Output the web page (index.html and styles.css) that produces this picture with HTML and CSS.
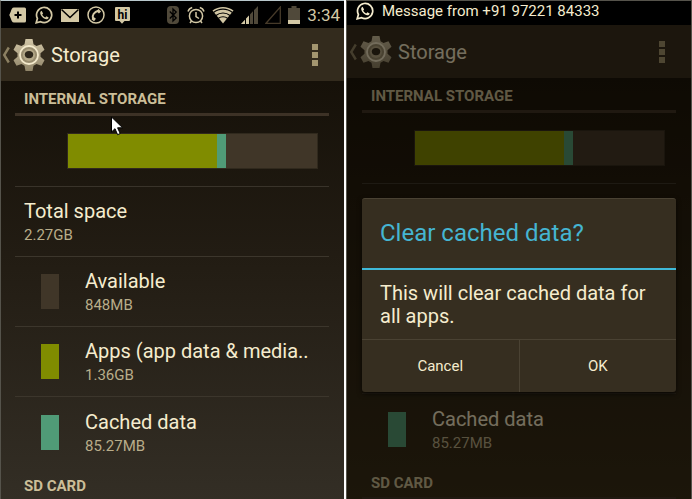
FILE: index.html
```html
<!DOCTYPE html>
<html lang="en">
<head>
  <meta charset="UTF-8">
  <title>Storage - clear cached data</title>
  <meta name="viewport" content="width=device-width, initial-scale=1.0">
  <link rel="stylesheet" href="styles.css">
</head>
<body>
  <!-- shared icons -->
  <svg class="defs" aria-hidden="true">
    <defs>
      <linearGradient id="metal" x1="0" y1="0" x2="0" y2="1">
        <stop offset="0" stop-color="#d2c6a6"/>
        <stop offset="1" stop-color="#8f8468"/>
      </linearGradient>
      <symbol id="gear" viewBox="0 0 32 34">
        <path fill="url(#metal)" d="M12.5 1h7l1 5.2 3 1.8 5-1.8 3 5.6-4 3.4v3.6l4 3.4-3 5.6-5-1.8-3 1.8-1 5.2h-7l-1-5.2-3-1.8-5 1.8-3-5.6 4-3.4v-3.6l-4-3.4 3-5.6 5 1.8 3-1.8z"/>
        <circle cx="16" cy="17" r="9" fill="#988c6e" stroke="#f3e9cb" stroke-width="1.8"/>
        <circle cx="16" cy="17" r="6" fill="#b5a988"/>
        <ellipse cx="16" cy="16.6" rx="4.2" ry="3.6" fill="#2f281b"/>
      </symbol>
      <symbol id="whatsapp" viewBox="0 0 18 18">
        <path fill="none" stroke="currentColor" stroke-width="1.7" d="M1.2 16.8l1.2-4.3A7.6 7.6 0 1 1 5.6 15.700z"/>
        <path fill="currentColor" d="M6.600 4.800c-1.700.8-1.800 2.600-.7 4.400 1.300 2.200 3.200 3.700 5.200 4.100 1.300.2 2.400-.6 2.600-1.800l-2.300-1.300-1.100 1.200c-1.400-.5-2.500-1.600-3.100-2.900l.9-1.100z"/>
      </symbol>
    </defs>
  </svg>

  <main class="screens">
    <section class="phone">
      <div class="status-bar">
        <div class="notifications">
          <svg width="18" height="18" viewBox="0 0 18 18"><path fill="currentColor" d="M5 1.500h10.500a1.500 1.500 0 0 1 1.500 1.500v12a1.500 1.500 0 0 1-1.500 1.500H5c-2 0-2.500-2-3.200-4L.3 9l1.500-3.500c.7-2 1.200-4 3.200-4z"/><path stroke="#000" stroke-width="2" d="M9 5.500v7M5.500 9h7"/></svg>
          <svg width="18" height="18"><use href="#whatsapp"/></svg>
          <svg width="18" height="18" viewBox="0 0 18 18"><path fill="currentColor" d="M0 3h18v13H0z"/><path fill="none" stroke="#000" stroke-width="1.500" d="M.5 3.500L9 11.500l8.500-8"/></svg>
          <svg width="18" height="18" viewBox="0 0 18 18"><circle cx="9" cy="9" r="8" fill="none" stroke="currentColor" stroke-width="1.500"/><path fill="none" stroke="currentColor" stroke-width="2" d="M6 13.200c-1.500-4 1.500-7.600 5.500-8.500"/><path stroke="currentColor" stroke-width="3" d="M5.500 12l2.500 2M10.500 4l2.500 2.500"/></svg>
          <svg width="18" height="18" viewBox="0 0 18 18"><path fill="currentColor" d="M3 1h13a1 1 0 0 1 1 1v12a1 1 0 0 1-1 1h-4.500L9 17.800 6.500 15H3a1 1 0 0 1-1-1V2a1 1 0 0 1 1-1z"/><text class="hi" x="9.500" y="12.500" text-anchor="middle">hi</text></svg>
        </div>
        <div class="system">
          <svg width="13" height="18" viewBox="0 0 13 18"><rect width="12" height="18" rx="4" fill="#50493a"/><path fill="none" stroke="#000" stroke-width="1.300" d="M2.800 5.500l6.400 6.500L6 15V3l3.200 3-6.400 6.500"/></svg>
          <svg width="18" height="18" viewBox="0 0 18 18"><g fill="none" stroke="currentColor" stroke-width="1.500"><circle cx="9" cy="10" r="6.600"/><path d="M9 6v4.500l3 2M1 5.500A6 6 0 0 1 5.200 1.500M17 5.500a6 6 0 0 0-4.200-4M4.500 15L3 17M13.500 15l1.500 2"/></g></svg>
          <svg width="22" height="18" viewBox="0 0 22 18"><path fill="currentColor" d="M.5 4.500C6.500-.2 15.500-.2 21.500 4.500L11 17.500z"/><g fill="none" stroke="#000" stroke-width="1.100"><path d="M1.500 6.500c5.500-4.500 13.500-4.500 19 0M4 9.500c4-3.300 10-3.300 14 0M6.500 12.300c2.500-2 6.500-2 9 0"/></g></svg>
          <svg width="17" height="18" viewBox="0 0 17 18"><path fill="#50493a" d="M0 18L17 0v18z"/><path fill="currentColor" d="M0 18l8-8.500V18z"/><path stroke="#000" d="M4.500 8v10M8.500 6v12M12.500 2v16"/></svg>
          <svg width="16" height="18" viewBox="0 0 16 18"><path fill="none" stroke="#463a29" stroke-width="1.300" d="M1 17.300L15.300 1v16.300z"/></svg>
          <svg width="12" height="18" viewBox="0 0 12 18"><path fill="#50493a" d="M3.500 0h5v2H12v16H0V2h3.500z"/><path fill="currentColor" d="M0 14h12v4H0z"/></svg>
          <time>3:34</time>
        </div>
      </div>

      <div class="screen">
        <header class="action-bar">
          <button class="up" aria-label="Navigate up">
            <svg width="9" height="18" viewBox="0 0 9 18"><path fill="none" stroke="#8c8062" stroke-width="2.400" d="M7.800 1.500L3.200 9l4.600 7.500"/></svg>
            <svg width="32" height="34"><use href="#gear"/></svg>
          </button>
          <h1>Storage</h1>
          <button class="more" aria-label="More options"><i></i><i></i><i></i></button>
        </header>

        <div class="content">
          <h2>Internal storage</h2>
          <div class="chart">
            <div class="usage">
              <span class="apps" style="width: 60%"></span>
              <span class="cached" style="width: 3.5%"></span>
            </div>
          </div>
          <ul class="list">
            <li><div><h3>Total space</h3><p>2.27GB</p></div></li>
            <li><span class="swatch free"></span><div><h3>Available</h3><p>848MB</p></div></li>
            <li><span class="swatch apps"></span><div><h3>Apps (app data &amp; media..</h3><p>1.36GB</p></div></li>
            <li><span class="swatch cached"></span><div><h3>Cached data</h3><p>85.27MB</p></div></li>
          </ul>
          <h2>SD card</h2>
        </div>
      </div>

      <svg class="pointer" width="13" height="20" viewBox="0 0 13 20"><path fill="#fff" stroke="#000" d="M.5 1v15l3.500-3.300 2.600 6 2.600-1.200-2.600-5.700h5z"/></svg>
    </section>

    <section class="phone with-dialog">
      <div class="status-bar ticker">
        <svg width="18" height="18"><use href="#whatsapp"/></svg>
        <span>Message from +91 97221 84333</span>
      </div>

      <div class="screen">
        <header class="action-bar">
          <button class="up" aria-label="Navigate up">
            <svg width="9" height="18" viewBox="0 0 9 18"><path fill="none" stroke="#8c8062" stroke-width="2.400" d="M7.800 1.500L3.200 9l4.600 7.500"/></svg>
            <svg width="32" height="34"><use href="#gear"/></svg>
          </button>
          <h1>Storage</h1>
          <button class="more" aria-label="More options"><i></i><i></i><i></i></button>
        </header>

        <div class="content">
          <h2>Internal storage</h2>
          <div class="chart">
            <div class="usage">
              <span class="apps" style="width: 60%"></span>
              <span class="cached" style="width: 3.5%"></span>
            </div>
          </div>
          <ul class="list">
            <li></li>
            <li></li>
            <li></li>
            <li><span class="swatch cached"></span><div><h3>Cached data</h3><p>85.27MB</p></div></li>
          </ul>
          <h2>SD card</h2>
        </div>

        <div class="overlay">
          <div class="dialog" role="dialog" aria-labelledby="dialogTitle">
            <h2 id="dialogTitle">Clear cached data?</h2>
            <p>This will clear cached data for all apps.</p>
            <div class="buttons">
              <button>Cancel</button>
              <button>OK</button>
            </div>
          </div>
        </div>
      </div>
    </section>
  </main>
</body>
</html>
```
FILE: styles.css
```css
* {
  box-sizing: border-box;
}
body {
  margin: 0;
  background: #fff;
  font-family: Roboto, "Liberation Sans", sans-serif;
  color: #f5ecce;
}
h1, h2, h3, p, ul {
  margin: 0;
  padding: 0;
  font-weight: normal;
}
button {
  border: 0;
  padding: 0;
  background: none;
  font: inherit;
  color: inherit;
  cursor: pointer;
}
svg {
  display: block;
  flex: none;
}
.defs {
  position: absolute;
  width: 0;
  height: 0;
}
.screens {
  display: grid;
  grid-template-columns: 344fr 346fr;
  gap: 2px;
  height: 100vh;
}
.phone {
  position: relative;
  display: flex;
  flex-direction: column;
  min-width: 0;
  overflow: hidden;
  border-top: 1px solid #b9c8cc;
  border-left: 1px solid #55534b;
}
.with-dialog {
  border-top-color: #55534b;
  border-right: 1px solid #55534b;
}

/* status bar */
.status-bar {
  flex: none;
  display: flex;
  align-items: center;
  justify-content: space-between;
  height: 27px;
  padding: 0 4px 0 8px;
  background: #000;
  color: #d3c8a5;
}
.notifications {
  display: flex;
  gap: 8px;
}
.system {
  display: flex;
  align-items: center;
  gap: 7px;
}
.system time {
  font-size: 17px;
}
.hi {
  font-size: 12px;
  font-weight: bold;
}
.ticker {
  justify-content: flex-start;
  gap: 8px;
  height: 24px;
  padding: 0 9px 4px;
  font-size: 15px;
  color: #f5ecce;
}

/* settings screen */
.screen {
  position: relative;
  flex: 1;
  min-height: 0;
  display: flex;
  flex-direction: column;
}
.action-bar {
  flex: none;
  display: flex;
  align-items: center;
  height: 53px;
  background: #332b1d;
}
.up {
  display: flex;
  align-items: center;
  gap: 3px;
}
.action-bar h1 {
  flex: 1;
  padding-left: 6px;
  font-size: 20px;
}
.more {
  display: grid;
  gap: 2px;
  margin-right: 26px;
}
.more i {
  width: 6px;
  height: 6px;
  background: #a3956f;
}
.content {
  flex: 1;
  min-height: 0;
  padding: 0 15px 0 14px;
  overflow: hidden;
  background: linear-gradient(#161109, #231d14 45%, #332e25);
}
.content h2 {
  height: 35px;
  padding: 0 9px;
  border-bottom: 3px solid #3d3226;
  line-height: 36px;
  font-size: 15px;
  font-weight: bold;
  text-transform: uppercase;
  color: #cbbe98;
}
.chart {
  height: 71px;
  padding: 17px 11px 17px 52px;
  border-bottom: 1px solid #39332a;
}
.usage {
  display: flex;
  height: 36px;
  border: 1px solid #30291d;
  background: #403628;
}
.apps {
  background: #808c00;
}
.cached {
  background: #509b77;
}
.free {
  background: #403628;
}
.list {
  list-style: none;
}
.list li {
  display: flex;
  align-items: center;
  gap: 26px;
  height: 70px;
  padding: 0 9px;
  border-bottom: 1px solid #3c362c;
}
.list li:last-child {
  height: 71px;
  border-bottom: 0;
}
.swatch {
  flex: none;
  width: 18px;
  height: 35px;
  margin-left: 17px;
}
.list h3 {
  line-height: 26px;
  font-size: 20px;
  white-space: nowrap;
}
.list p {
  line-height: 22px;
  font-size: 15px;
  color: #b9ad8a;
}
.pointer {
  position: absolute;
  top: 115px;
  left: 110px;
}

/* dialog */
.with-dialog .action-bar {
  padding-left: 1px;
}
.with-dialog .content {
  padding: 0 15px;
  background: linear-gradient(#161109, #332a18);
}
.overlay {
  position: absolute;
  inset: 0;
  display: flex;
  align-items: center;
  padding: 66px 15px 0;
  background: rgba(10, 5, 0, 0.55);
}
.dialog {
  flex: 1;
  border-top: 1px solid #4a4233;
  border-radius: 3px;
  background: #362e20;
  box-shadow: 0 2px 5px rgba(0, 0, 0, 0.6);
}
.dialog h2 {
  padding: 0 18px;
  border-bottom: 2px solid #3fb9d8;
  line-height: 69px;
  font-size: 24px;
  color: #45b5d2;
}
.dialog p {
  padding: 12px 18px 11px;
  line-height: 23px;
  font-size: 20px;
}
.buttons {
  display: flex;
  border-top: 1px solid #4a4233;
}
.buttons button {
  flex: 1;
  height: 52px;
  font-size: 15px;
}
.buttons button + button {
  border-left: 1px solid #4a4233;
}
```
